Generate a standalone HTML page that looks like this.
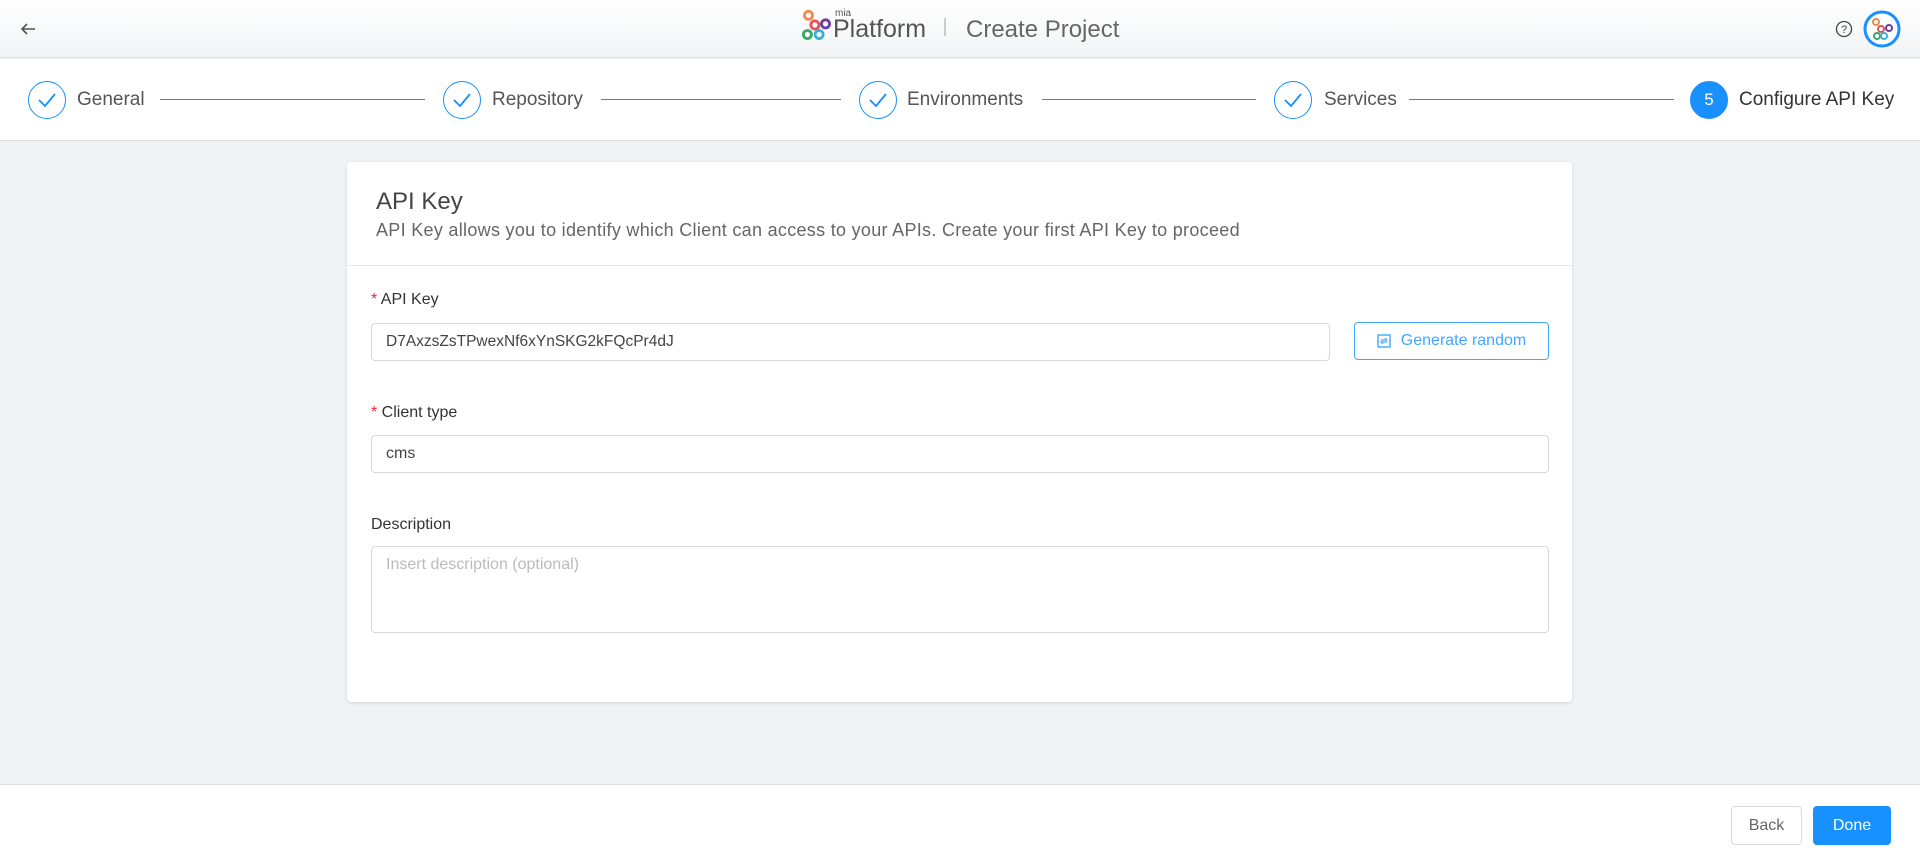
<!DOCTYPE html>
<html><head><meta charset="utf-8"><style>
*{box-sizing:border-box;margin:0;padding:0}
body{width:1920px;height:853px;overflow:hidden;font-family:"Liberation Sans",sans-serif;background:#f0f2f5;position:relative;color:#333}
.hdr{position:absolute;left:0;top:0;width:1920px;height:58px;background:linear-gradient(#fff,#f3f4f6);border-bottom:1px solid #ddd}
.steps{position:absolute;top:59px;left:0;width:1920px;height:82px;background:#fff;border-bottom:1px solid #ddd}
.c{position:absolute;top:81px;width:38px;height:38px;border:1.5px solid #1890ff;border-radius:50%;display:flex;align-items:center;justify-content:center}
.st{position:absolute;top:89px;font-size:19px;color:#555}
.ln{position:absolute;top:99px;height:1px;background:#1890ff}
.card{position:absolute;left:347px;top:162px;width:1225px;height:540px;background:#fff;border-radius:4px;box-shadow:0 1px 3px rgba(0,0,0,.12)}
.lbl{position:absolute;font-size:16px;color:#333}
.req::before{content:"* ";color:#f5222d}
.inp{position:absolute;border:1px solid #d9d9d9;border-radius:4px;font-size:16px;padding:9px 14px;color:#444;background:#fff}
.foot{position:absolute;left:0;top:784px;width:1920px;height:69px;background:#fff;border-top:1px solid #ddd}
</style></head><body>
<div class="hdr">
<svg style="position:absolute;left:18px;top:19px" width="20" height="20" viewBox="0 0 20 20"><path d="M17 10H4M9 5l-5 5 5 5" stroke="#555" stroke-width="1.6" fill="none"/></svg>
<svg style="position:absolute;left:801px;top:10px" width="32" height="32" viewBox="0 0 30 30" fill="none" stroke-width="2.6"><circle cx="7" cy="5" r="3.8" stroke="#f08a4b"/><circle cx="13" cy="14" r="3.8" stroke="#e94e5b"/><circle cx="23" cy="13" r="3.8" stroke="#6b3fa0"/><circle cx="6" cy="23" r="3.8" stroke="#3aa66b"/><circle cx="17" cy="23" r="3.8" stroke="#3ab0d8"/></svg>
<div style="position:absolute;left:835px;top:8px;font-size:10px;color:#555">mia</div>
<div style="position:absolute;left:833px;top:15px;font-size:25px;color:#555">Platform</div>
<div style="position:absolute;left:944px;top:18px;width:2px;height:18px;background:#ccc"></div>
<div style="position:absolute;left:966px;top:16px;font-size:24px;color:#666">Create Project</div>
<svg style="position:absolute;left:1835px;top:20px" width="18" height="18" viewBox="0 0 18 18"><circle cx="9" cy="9" r="7.5" stroke="#444" stroke-width="1.3" fill="none"/><text x="9" y="13" font-size="11" text-anchor="middle" fill="#444" font-family="Liberation Sans">?</text></svg>
<svg style="position:absolute;left:1863px;top:10px" width="38" height="38" viewBox="0 0 38 38" fill="none" stroke-width="2"><circle cx="19" cy="19" r="17" stroke="#1890ff" stroke-width="3" fill="#fff"/><circle cx="13" cy="12" r="3" stroke="#f08a4b"/><circle cx="18" cy="19" r="3" stroke="#e94e5b"/><circle cx="26" cy="18" r="3" stroke="#6b3fa0"/><circle cx="14" cy="26" r="3" stroke="#3aa66b"/><circle cx="21" cy="26" r="3" stroke="#3ab0d8"/></svg>
</div>
<div class="steps"></div>
<div class="c" style="left:28px"><svg width="20" height="16"><path d="M2 8l6 6L18 2" stroke="#1890ff" stroke-width="1.8" fill="none"/></svg></div>
<div class="st" style="left:77px">General</div><div class="ln" style="left:160px;width:265px"></div>
<div class="c" style="left:443px"><svg width="20" height="16"><path d="M2 8l6 6L18 2" stroke="#1890ff" stroke-width="1.8" fill="none"/></svg></div>
<div class="st" style="left:492px">Repository</div><div class="ln" style="left:601px;width:240px"></div>
<div class="c" style="left:859px"><svg width="20" height="16"><path d="M2 8l6 6L18 2" stroke="#1890ff" stroke-width="1.8" fill="none"/></svg></div>
<div class="st" style="left:907px">Environments</div><div class="ln" style="left:1042px;width:214px"></div>
<div class="c" style="left:1274px"><svg width="20" height="16"><path d="M2 8l6 6L18 2" stroke="#1890ff" stroke-width="1.8" fill="none"/></svg></div>
<div class="st" style="left:1324px">Services</div><div class="ln" style="left:1409px;width:265px"></div>
<div class="c" style="left:1690px;background:#1890ff;color:#fff;font-size:17px">5</div>
<div class="st" style="left:1739px;color:#333">Configure API Key</div>
<div class="card">
<div style="position:absolute;left:29px;top:26px;font-size:24px;color:#444">API Key</div>
<div style="position:absolute;left:29px;top:58px;font-size:18px;letter-spacing:0.3px;color:#666">API Key allows you to identify which Client can access to your APIs. Create your first API Key to proceed</div>
<div style="position:absolute;left:0;top:103px;width:100%;height:1px;background:#e8e8e8"></div>
<div class="lbl req" style="left:24px;top:129px">API Key</div>
<div class="inp" style="left:24px;top:161px;width:959px;height:38px;font-size:15.5px">D7AxzsZsTPwexNf6xYnSKG2kFQcPr4dJ</div>
<div style="position:absolute;left:1007px;top:160px;width:195px;height:38px;border:1px solid #40a9ff;border-radius:4px;color:#40a9ff;font-size:16px;display:flex;align-items:center;justify-content:center;gap:10px"><svg width="14" height="14"><rect x="1" y="1" width="12" height="12" fill="none" stroke="#40a9ff" stroke-width="1.4"/><path d="M4 6h6l-2-2M10 8H4l2 2" stroke="#40a9ff" stroke-width="1.2" fill="none"/></svg>Generate random</div>
<div class="lbl req" style="left:24px;top:242px">Client type</div>
<div class="inp" style="left:24px;top:273px;width:1178px;height:38px">cms</div>
<div class="lbl" style="left:24px;top:354px">Description</div>
<div class="inp" style="left:24px;top:384px;width:1178px;height:87px;color:#bbb">Insert description (optional)</div>
</div>
<div class="foot">
<div style="position:absolute;left:1731px;top:21px;width:71px;height:39px;border:1px solid #d9d9d9;border-radius:4px;font-size:16px;color:#666;display:flex;align-items:center;justify-content:center">Back</div>
<div style="position:absolute;left:1813px;top:21px;width:78px;height:39px;background:#1890ff;border-radius:4px;font-size:16px;color:#fff;display:flex;align-items:center;justify-content:center">Done</div>
</div>
</body></html>
